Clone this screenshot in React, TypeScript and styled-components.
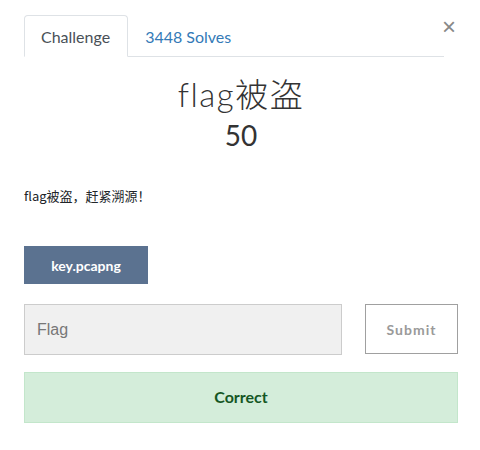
import React, { useState } from 'react';
import styled, { createGlobalStyle } from 'styled-components';

const GlobalStyle = createGlobalStyle`
  html, body {
    margin: 0;
    padding: 0;
    background: #fff;
  }
  body {
    font-family: Lato, "Noto Sans CJK SC", sans-serif;
    color: #212529;
  }
  * {
    box-sizing: border-box;
  }
`;

const Modal = styled.div`
  width: 480px;
  padding: 15px 22px 0 24px;
  position: relative;
`;

const TabBar = styled.div`
  display: flex;
  width: 420px;
  border-bottom: 1px solid #dee2e6;
  height: 42px;
`;

const Tab = styled.div<{ active?: boolean }>`
  height: 42px;
  padding: 0 17px 0 16px;
  display: flex;
  align-items: center;
  font-size: 16px;
  margin-bottom: -1px;
  border: 1px solid ${({ active }) => (active ? '#dee2e6' : 'transparent')};
  border-bottom-color: ${({ active }) => (active ? '#fff' : 'transparent')};
  border-radius: 4px 4px 0 0;
  background: ${({ active }) => (active ? '#fff' : 'transparent')};
  color: ${({ active }) => (active ? '#495057' : '#337ab7')};
  cursor: pointer;
  padding-top: 1px;
`;

const Close = styled.button`
  position: absolute;
  top: 17px;
  right: 24px;
  border: none;
  background: none;
  padding: 0;
  font-size: 24px;
  line-height: 20px;
  color: #888;
  font-family: "Liberation Sans", Arial, sans-serif;
  cursor: pointer;
`;

const Header = styled.div`
  text-align: center;
  padding-top: 17px;
`;

const Title = styled.h2`
  margin: 0;
  font-size: 33px;
  font-weight: 300;
  line-height: 40px;
  letter-spacing: 1.5px;
  color: #333;
  font-family: Lato, "Noto Sans CJK SC", sans-serif;
`;

const Points = styled.h3`
  margin: 3px 0 0;
  font-size: 28px;
  font-weight: 400;
  line-height: 36px;
  color: #333;
`;

const Description = styled.p`
  margin: 33px 0 0;
  font-size: 13px;
  line-height: 19px;
  color: #212529;
  font-family: "Noto Sans CJK SC", sans-serif;
`;

const FileButton = styled.a`
  display: inline-flex;
  align-items: center;
  justify-content: center;
  margin-top: 41px;
  width: 124px;
  height: 38px;
  background: #5b7290;
  color: #fff;
  font-size: 14px;
  font-weight: 700;
  text-decoration: none;
`;

const SubmitRow = styled.div`
  display: flex;
  gap: 23px;
  margin-top: 20px;
  width: 434px;
`;

const FlagInput = styled.input`
  width: 318px;
  height: 51px;
  background: #f0f0f0;
  border: 1px solid #ccc;
  padding: 0 12px;
  font-size: 16px;
  font-family: "Liberation Sans", Arial, sans-serif;
  color: #333;
  outline: none;
  &::placeholder {
    color: #777;
  }
`;

const SubmitButton = styled.button`
  width: 93px;
  height: 50px;
  background: #fff;
  border: 1px solid #a0a0a0;
  color: #9a9a9a;
  font-family: Lato, sans-serif;
  font-weight: 700;
  font-size: 14px;
  letter-spacing: 1px;
  cursor: pointer;
`;

const Notice = styled.div`
  margin-top: 17px;
  width: 434px;
  height: 51px;
  background: #d4edda;
  border: 1px solid #c3e6cb;
  color: #155724;
  display: flex;
  align-items: center;
  justify-content: center;
  font-size: 16px;
  font-weight: 700;
  padding-bottom: 2px;
`;

export default function App() {
  const [tab, setTab] = useState<'challenge' | 'solves'>('challenge');
  const [flag, setFlag] = useState('');

  return (
    <>
      <GlobalStyle />
      <Modal>
        <TabBar>
          <Tab active={tab === 'challenge'} onClick={() => setTab('challenge')}>
            Challenge
          </Tab>
          <Tab active={tab === 'solves'} onClick={() => setTab('solves')}>
            3448 Solves
          </Tab>
        </TabBar>
        <Close aria-label="Close">×</Close>
        <Header>
          <Title>flag被盗</Title>
          <Points>50</Points>
        </Header>
        <Description>flag被盗，赶紧溯源！</Description>
        <FileButton href="#">key.pcapng</FileButton>
        <SubmitRow>
          <FlagInput
            placeholder="Flag"
            value={flag}
            onChange={(e) => setFlag(e.target.value)}
          />
          <SubmitButton>Submit</SubmitButton>
        </SubmitRow>
        <Notice>Correct</Notice>
      </Modal>
    </>
  );
}
